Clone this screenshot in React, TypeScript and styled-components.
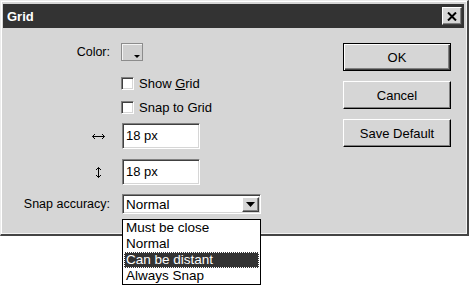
import styled, { createGlobalStyle } from "styled-components";

const face = "#d6d6d6";
const title = "#333333";

const GlobalStyle = createGlobalStyle`
  html, body {
    margin: 0;
    padding: 0;
    background: #ffffff;
  }
  body {
    font-family: "Liberation Sans", Arial, sans-serif;
    font-size: 13px;
    color: #000000;
  }
  #root {
    min-height: 286px;
  }
`;

const accuracyOptions = ["Must be close", "Normal", "Can be distant", "Always Snap"];

const App: React.FC = () => {
  return (
    <>
      <GlobalStyle />
      <Window>
        <TitleBar>
          <TitleText>Grid</TitleText>
          <CloseButton>
            <svg width="10" height="9" viewBox="0 0 10 9">
              <path d="M1 0.5 L9 8.5 M9 0.5 L1 8.5" stroke="#000" strokeWidth="2" />
            </svg>
          </CloseButton>
        </TitleBar>
        <Body>
          <Form>
            <Row $height={18}>
              <Label>Color:</Label>
              <Swatch>
                <SwatchArrow />
              </Swatch>
            </Row>
            <Row $height={24} $top={10}>
              <Label />
              <CheckItem>
                <CheckBox />
                <span>
                  Show <u>G</u>rid
                </span>
              </CheckItem>
            </Row>
            <Row $height={24}>
              <Label />
              <CheckItem>
                <CheckBox />
                <span>Snap to Grid</span>
              </CheckItem>
            </Row>
            <Row $height={26} $top={4}>
              <IconLabel>
                <svg width="13" height="7" viewBox="0 0 13 7">
                  <path d="M0.5 3.5 H12.5" stroke="#000" strokeWidth="1" />
                  <path d="M3 1 L0.5 3.5 L3 6 M10 1 L12.5 3.5 L10 6" stroke="#000" fill="none" strokeWidth="1" />
                </svg>
              </IconLabel>
              <TextInput defaultValue="18 px" />
            </Row>
            <Row $height={26} $top={10}>
              <IconLabel $inset={3}>
                <svg width="7" height="11" viewBox="0 0 7 11">
                  <path d="M3.5 0.5 V10.5" stroke="#000" strokeWidth="1" />
                  <path d="M1 3 L3.5 0.5 L6 3 M1 8 L3.5 10.5 L6 8" stroke="#000" fill="none" strokeWidth="1" />
                </svg>
              </IconLabel>
              <TextInput defaultValue="18 px" />
            </Row>
            <Row $height={20} $top={9}>
              <Label>Snap accuracy:</Label>
              <Select>
                <SelectValue>Normal</SelectValue>
                <SelectButton>
                  <svg width="9" height="5" viewBox="0 0 9 5">
                    <path d="M0 0 H9 L4.5 5 Z" fill="#000" />
                  </svg>
                </SelectButton>
                <OptionList>
                  {accuracyOptions.map((option) => (
                    <Option key={option} $active={option === "Can be distant"}>
                      {option}
                    </Option>
                  ))}
                </OptionList>
              </Select>
            </Row>
          </Form>
          <Buttons>
            <Button $default>OK</Button>
            <Button>Cancel</Button>
            <Button>Save Default</Button>
          </Buttons>
        </Body>
      </Window>
    </>
  );
};

const Window = styled.div`
  box-sizing: border-box;
  width: 469px;
  height: 236px;
  padding: 3px 3px 0 2px;
  background: ${face};
  border-top: 1px solid #ececec;
  border-left: 1px solid #ececec;
  border-right: 2px solid #444444;
  border-bottom: 2px solid #444444;
  box-shadow: inset 1px 1px #ffffff, inset -1px -1px #f2f2f2;
  display: flex;
  flex-direction: column;
`;

const TitleBar = styled.div`
  height: 24px;
  background: ${title};
  display: flex;
  align-items: center;
  justify-content: space-between;
  padding: 0 2px 0 4px;
`;

const TitleText = styled.span`
  color: #ffffff;
  font-weight: bold;
  font-size: 13px;
`;

const CloseButton = styled.div`
  box-sizing: border-box;
  width: 20px;
  height: 18px;
  background: ${face};
  border-top: 1px solid #ffffff;
  border-left: 1px solid #ffffff;
  border-right: 1px solid #404040;
  border-bottom: 1px solid #404040;
  box-shadow: inset -1px -1px #808080;
  display: flex;
  align-items: center;
  justify-content: center;
`;

const Body = styled.div`
  flex: 1;
  display: flex;
  padding: 15px 13px 0 0;
`;

const Form = styled.div`
  display: flex;
  flex-direction: column;
`;

interface RowProps {
  $height: number;
  $top?: number;
}

const Row = styled.div<RowProps>`
  display: flex;
  align-items: center;
  gap: 11px;
  height: ${(p) => p.$height}px;
  margin-top: ${(p) => p.$top ?? 0}px;
`;

const Label = styled.div`
  width: 107px;
  text-align: right;
  font-size: 12.5px;
`;

interface IconLabelProps {
  $inset?: number;
}

const IconLabel = styled.div<IconLabelProps>`
  width: 107px;
  box-sizing: border-box;
  padding-right: ${(p) => 5 + (p.$inset ?? 0)}px;
  display: flex;
  justify-content: flex-end;
  align-items: center;
`;

const Swatch = styled.div`
  position: relative;
  box-sizing: border-box;
  width: 22px;
  height: 18px;
  background: #d0d0d0;
  border: 1px solid #8c8c8c;
  box-shadow: inset 1px 1px #f4f4f4;
`;

const SwatchArrow = styled.div`
  position: absolute;
  right: 2px;
  bottom: 2px;
  width: 0;
  height: 0;
  border-left: 3px solid transparent;
  border-right: 3px solid transparent;
  border-top: 3px solid #000000;
`;

const CheckItem = styled.label`
  display: flex;
  align-items: center;
  gap: 5px;
  font-size: 13px;
`;

const CheckBox = styled.span`
  box-sizing: border-box;
  width: 13px;
  height: 13px;
  background: #ffffff;
  border-top: 1px solid #808080;
  border-left: 1px solid #808080;
  border-right: 1px solid #ffffff;
  border-bottom: 1px solid #ffffff;
  box-shadow: inset 1px 1px #404040, inset -1px -1px #d6d6d6;
`;

const TextInput = styled.input`
  box-sizing: border-box;
  width: 78px;
  height: 26px;
  margin: 0 0 0 1px;
  padding: 0 3px 2px;
  font-family: inherit;
  font-size: 13px;
  color: #000000;
  background: #ffffff;
  border-top: 1px solid #808080;
  border-left: 1px solid #808080;
  border-right: 1px solid #ffffff;
  border-bottom: 1px solid #ffffff;
  box-shadow: inset 1px 1px #404040, inset -1px -1px #d6d6d6;
  outline: none;
`;

const Select = styled.div`
  position: relative;
  box-sizing: border-box;
  width: 139px;
  height: 20px;
  margin-left: 1px;
  background: #ffffff;
  border-top: 1px solid #808080;
  border-left: 1px solid #808080;
  border-right: 1px solid #ffffff;
  border-bottom: 1px solid #ffffff;
  box-shadow: inset 1px 1px #404040, inset -1px -1px #d6d6d6;
  display: flex;
  align-items: center;
  justify-content: space-between;
  padding: 0 1px 0 3px;
`;

const SelectValue = styled.span`
  font-size: 13.5px;
`;

const SelectButton = styled.div`
  box-sizing: border-box;
  width: 17px;
  height: 15px;
  background: ${face};
  border-top: 1px solid #ffffff;
  border-left: 1px solid #ffffff;
  border-right: 1px solid #404040;
  border-bottom: 1px solid #404040;
  box-shadow: inset -1px -1px #808080;
  display: flex;
  align-items: center;
  justify-content: center;
`;

const OptionList = styled.div`
  position: absolute;
  top: 24px;
  left: -1px;
  box-sizing: border-box;
  width: 139px;
  padding: 0 1px;
  background: #ffffff;
  border: 1px solid #000000;
  display: flex;
  flex-direction: column;
  z-index: 2;
`;

interface OptionProps {
  $active?: boolean;
}

const Option = styled.div<OptionProps>`
  box-sizing: border-box;
  height: 16px;
  line-height: 14px;
  padding: 0 1px;
  font-size: 13.5px;
  white-space: nowrap;
  background: ${(p) => (p.$active ? title : "#ffffff")};
  color: ${(p) => (p.$active ? "#ffffff" : "#000000")};
  border: 1px ${(p) => (p.$active ? "dotted #ffffff" : "solid transparent")};
`;

const Buttons = styled.div`
  margin-left: auto;
  display: flex;
  flex-direction: column;
  gap: 10px;
`;

interface ButtonProps {
  $default?: boolean;
}

const Button = styled.div<ButtonProps>`
  box-sizing: border-box;
  width: 108px;
  height: 28px;
  display: flex;
  align-items: center;
  justify-content: center;
  font-size: 13px;
  background: ${face};
  border-top: 1px solid ${(p) => (p.$default ? "#000000" : "#ffffff")};
  border-left: 1px solid ${(p) => (p.$default ? "#000000" : "#ffffff")};
  border-right: 1px solid #000000;
  border-bottom: 1px solid #000000;
  box-shadow: ${(p) =>
    p.$default
      ? "inset 1px 1px #ffffff, inset -1px -1px #404040, inset -2px -2px #808080"
      : "inset -1px -1px #808080"};
`;

export default App;
